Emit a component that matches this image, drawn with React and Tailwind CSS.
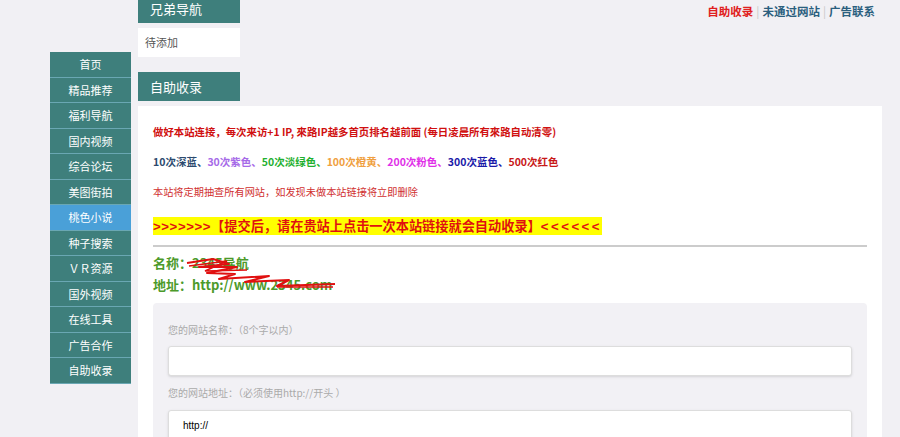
import React from 'react';

const navItems = [
  '首页', '精品推荐', '福利导航', '国内视频', '综合论坛', '美图街拍', '桃色小说',
  '种子搜索', 'ＶＲ资源', '国外视频', '在线工具', '广告合作', '自助收录',
];

const levels = [
  { text: '10次深蓝、', color: 'text-[#2c4a6e]' },
  { text: '30次紫色、', color: 'text-[#a66ae8]' },
  { text: '50次淡绿色、', color: 'text-[#1fb030]' },
  { text: '100次橙黄、', color: 'text-[#f0a040]' },
  { text: '200次粉色、', color: 'text-[#e030e8]' },
  { text: '300次蓝色、', color: 'text-[#1a1aa8]' },
  { text: '500次红色', color: 'text-[#c81818]' },
];

const Sidebar = () => (
  <ul className="w-[81px] mt-[52px] shrink-0">
    {navItems.map((item) => (
      <li
        key={item}
        className={`h-[25.5px] leading-[24.5px] border-b border-[#6aa7b3] text-center text-[11px] text-white ${
          item === '桃色小说' ? 'bg-[#4aa0d8]' : 'bg-[#3e7f7c]'
        }`}
      >
        {item}
      </li>
    ))}
  </ul>
);

// red scribble that hides the example site name
const Scribble = () => (
  <svg className="absolute left-[32px] top-[3px] pointer-events-none" width="160" height="40" viewBox="0 0 160 40">
    <polyline
      points="2,8 28,4 44,9 14,12 52,12 22,18 50,19 34,24 84,21 60,27 104,25 92,31 150,29"
      fill="none"
      stroke="#e01010"
      strokeWidth="2"
      strokeLinejoin="round"
    />
    <polyline points="4,11 42,6 20,16 62,15" fill="none" stroke="#e01010" strokeWidth="1.5" />
    <line x1="92" y1="32" x2="148" y2="32" stroke="#e01010" strokeWidth="1.5" />
  </svg>
);

const App = () => {
  return (
    <div className="h-[437px] w-full overflow-hidden bg-[#f1f0f4] font-['Noto_Sans_CJK_SC',sans-serif]">
      <div className="flex items-start pl-[50px] gap-[7px]">
        <Sidebar />

        <div className="w-[744px] -mt-[6px]">
          {/* top row: 兄弟导航 + links */}
          <div className="flex justify-between items-start">
            <div className="w-[102px] h-[29px] leading-[29px] bg-[#3e7f7c] text-white text-[13px] pl-[12px]">
              兄弟导航
            </div>
            <div className="mt-[10px] mr-[7px] leading-[14px] text-[11.5px] font-bold flex gap-[3px]">
              <span className="text-[#e02020]">自助收录</span>
              <span className="text-[#c8c8c8] font-normal">|</span>
              <span className="text-[#2b5f7e]">未通过网站</span>
              <span className="text-[#c8c8c8] font-normal">|</span>
              <span className="text-[#2b5f7e]">广告联系</span>
            </div>
          </div>

          <div className="w-[102px] h-[29px] leading-[29px] mt-[5px] bg-white text-[11px] text-[#555] pl-[7px]">
            待添加
          </div>

          <div className="w-[102px] h-[29px] leading-[29px] mt-[15px] bg-[#3e7f7c] text-white text-[13px] pl-[12px]">
            自助收录
          </div>

          {/* main panel */}
          <div className="mt-[5px] bg-white px-[15px] pt-[11px] h-[400px]">
            <p className="leading-[30px] text-[10.4px] font-bold text-[#d01010]">
              做好本站连接，每次来访+1 IP, 來路IP越多首页排名越前面 (每日凌晨所有來路自动清零)
            </p>
            <p className="leading-[30px] text-[10.5px] font-bold">
              {levels.map((l) => (
                <span key={l.text} className={l.color}>{l.text}</span>
              ))}
            </p>
            <p className="leading-[30px] text-[10.2px] text-[#d03030]">
              本站将定期抽查所有网站，如发现未做本站链接将立即删除
            </p>
            <div className="mt-[5px]">
              <span className="inline-block h-[18px] leading-[18px] bg-[#ffff00] text-[13.2px] font-bold text-[#e01010]">
                <span className="font-['Liberation_Sans',sans-serif] tracking-[0.6px]">&gt;&gt;&gt;&gt;&gt;&gt;&gt;</span>
                【提交后，请在贵站上点击一次本站链接就会自动收录】
                <span className="font-['Liberation_Sans',sans-serif] tracking-[2.5px]">&lt;&lt;&lt;&lt;&lt;&lt;</span>
              </span>
            </div>
            <div className="mt-[9px] h-[2px] bg-[#cccccc]"></div>

            <div className="relative mt-[5px] text-[13px] font-bold text-[#4c9a2a]">
              <p className="leading-[22px]">名称：2345导航</p>
              <p className="leading-[22px]">地址：http://www.2345.com</p>
              <Scribble />
            </div>

            {/* form */}
            <div className="mt-[7px] bg-[#f2f1f5] rounded-[4px] px-[15px] pt-[17px] pb-[20px]">
              <label className="block leading-[20px] text-[10px] text-[#aaaaaa]">
                您的网站名称：（8个字以内）
              </label>
              <input
                type="text"
                className="block mt-[6px] w-full h-[30px] bg-white border border-[#dddddd] rounded-[3px] shadow-sm outline-none"
              />
              <label className="block mt-[7px] leading-[20px] text-[10px] text-[#aaaaaa]">
                您的网站地址：（必须使用http://开头 ）
              </label>
              <input
                type="text"
                defaultValue="http://"
                className="block mt-[7px] w-full h-[30px] bg-white border border-[#dddddd] rounded-[3px] shadow-sm outline-none px-[14px] text-[10px] text-black font-['Liberation_Sans',sans-serif]"
              />
            </div>
          </div>
        </div>
      </div>
    </div>
  );
};

export default App;
